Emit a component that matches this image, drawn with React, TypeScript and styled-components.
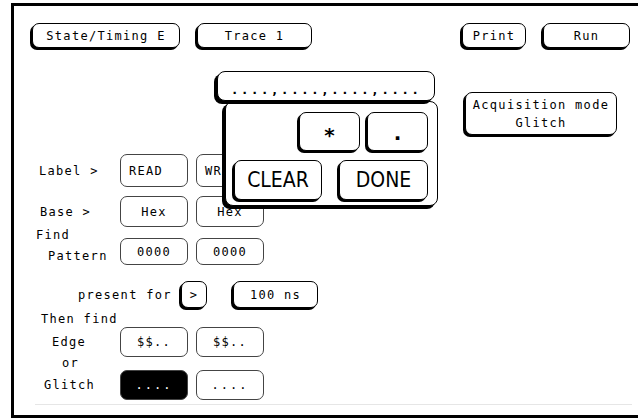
import React from 'react'
import styled, { createGlobalStyle } from 'styled-components'

const GlobalStyle = createGlobalStyle`
  html, body {
    margin: 0;
    padding: 0;
    background: #fff;
    overflow: hidden;
  }
  body {
    font-family: "DejaVu Sans Mono", "Liberation Mono", monospace;
    font-size: 12px;
    letter-spacing: 1.3px;
    color: #000;
  }
`

const Screen = styled.div`
  width: 638px;
  height: 418px;
  overflow: hidden;
  background: #fff;
`

const Frame = styled.div`
  position: relative;
  box-sizing: border-box;
  margin: 3px 0 0 11px;
  width: 627px;
  height: 415px;
  border: 3px solid #000;
  border-right: none;
  display: flex;
  flex-direction: column;
`

const TopBar = styled.div`
  display: flex;
  align-items: center;
  gap: 17px;
  margin: 17px 0 0 18px;
  width: 598px;
  height: 25px;
`

const Spacer = styled.div`
  flex: 1;
`

const Gap = styled.div<{ $w: number }>`
  flex: none;
  width: ${(p) => p.$w}px;
`

type KeyProps = {
  $w: number
  $h: number
  $raised?: boolean
  $left?: boolean
  $dark?: boolean
  $line?: number
}

const Key = styled.div<KeyProps>`
  box-sizing: border-box;
  flex: none;
  width: ${(p) => p.$w}px;
  height: ${(p) => p.$h}px;
  border: ${(p) => p.$line ?? 1}px solid ${(p) => (p.$raised ? '#000' : '#444')};
  border-radius: 7px;
  background: ${(p) => (p.$dark ? '#000' : '#fff')};
  color: ${(p) => (p.$dark ? '#fff' : '#000')};
  box-shadow: ${(p) => (p.$raised ? '-2px 2px 0 #000' : 'none')};
  display: flex;
  align-items: center;
  justify-content: ${(p) => (p.$left ? 'flex-start' : 'center')};
  padding-left: ${(p) => (p.$left ? '8px' : '0')};
  white-space: nowrap;
`

const AcqRow = styled.div`
  display: flex;
  margin: 44px 0 0 451px;
`

const AcqText = styled.div`
  text-align: center;
  line-height: 18px;
`

const Form = styled.div`
  display: flex;
  flex-direction: column;
  margin-top: 19px;
`

const Row = styled.div<{ $h: number; $mt: number }>`
  display: flex;
  align-items: center;
  gap: 8px;
  height: ${(p) => p.$h}px;
  margin-top: ${(p) => p.$mt}px;
`

const LabelCell = styled.div<{ $indent: number; $w?: number }>`
  box-sizing: border-box;
  flex: none;
  width: ${(p) => (p.$w ?? 98)}px;
  padding-left: ${(p) => p.$indent}px;
  white-space: nowrap;
`

const StackCell = styled.div`
  flex: none;
  align-self: flex-start;
  width: 98px;
  display: flex;
  flex-direction: column;
`

const Line = styled.div<{ $indent: number; $mt?: number; $h?: number }>`
  height: ${(p) => p.$h ?? 14}px;
  line-height: ${(p) => p.$h ?? 14}px;
  margin-top: ${(p) => p.$mt ?? 0}px;
  padding-left: ${(p) => p.$indent}px;
  white-space: nowrap;
`

const BottomKeys = styled.div`
  display: flex;
  gap: 8px;
  align-self: flex-end;
`

const Divider = styled.div`
  margin: 4px 0 0 21px;
  width: 597px;
  height: 1px;
  background: #e6e6e6;
`

const Overlay = styled.div`
  position: absolute;
  left: 203px;
  top: 65px;
  display: flex;
  flex-direction: column;
`

const DotField = styled.div`
  position: relative;
  z-index: 2;
  box-sizing: border-box;
  width: 218px;
  height: 30px;
  border: 1.5px solid #000;
  border-radius: 8px;
  background: #fff;
  box-shadow: -3px 3px 0 #000;
  display: flex;
  align-items: flex-end;
  justify-content: center;
  padding-bottom: 3px;
  font-size: 13px;
  font-weight: bold;
  letter-spacing: 2.2px;
`

const Keypad = styled.div`
  box-sizing: border-box;
  margin-left: 8px;
  width: 213px;
  height: 105px;
  border: 1.5px solid #000;
  border-radius: 8px;
  background: #fff;
  box-shadow: -3px 3px 0 #000;
  display: flex;
  flex-direction: column;
  gap: 9px;
  padding: 10px 9px 0 8px;
`

const PadRow = styled.div<{ $end?: boolean }>`
  display: flex;
  gap: ${(p) => (p.$end ? 7 : 17)}px;
  justify-content: ${(p) => (p.$end ? 'flex-end' : 'flex-start')};
`

const BigText = styled.span`
  font-family: "DejaVu Sans", "Liberation Sans", sans-serif;
  font-stretch: condensed;
  font-size: 21px;
  letter-spacing: 0;
  line-height: 1;
`

const Symbol = styled.span<{ $drop: number }>`
  font-family: "DejaVu Sans", "Liberation Sans", sans-serif;
  font-size: 20px;
  font-weight: bold;
  letter-spacing: 0;
  line-height: 1;
  padding-top: ${(p) => p.$drop}px;
`

const Dots = styled.span`
  letter-spacing: 2px;
`

const App: React.FC = () => {
  return (
    <Screen>
      <GlobalStyle />
      <Frame>
        <TopBar>
          <Key $w={148} $h={25} $raised>State/Timing E</Key>
          <Key $w={115} $h={25} $raised>Trace 1</Key>
          <Spacer />
          <Key $w={64} $h={25} $raised>Print</Key>
          <Key $w={87} $h={25} $raised>Run</Key>
        </TopBar>

        <AcqRow>
          <Key $w={152} $h={43} $raised>
            <AcqText>
              Acquisition mode
              <br />
              Glitch
            </AcqText>
          </Key>
        </AcqRow>

        <Form>
          <Row $h={33} $mt={0}>
            <LabelCell $indent={25}>Label &gt;</LabelCell>
            <Key $w={68} $h={33} $left>READ</Key>
            <Key $w={68} $h={33} $left>WR</Key>
          </Row>
          <Row $h={31} $mt={9}>
            <LabelCell $indent={26}>Base &gt;</LabelCell>
            <Key $w={68} $h={31}>Hex</Key>
            <Key $w={68} $h={31}>Hex</Key>
          </Row>
          <Row $h={37} $mt={1}>
            <StackCell>
              <Line $indent={22}>Find</Line>
              <Line $indent={34} $mt={7}>Pattern</Line>
            </StackCell>
            <BottomKeys>
              <Key $w={68} $h={27}>0000</Key>
              <Key $w={68} $h={27}>0000</Key>
            </BottomKeys>
          </Row>
          <Row $h={27} $mt={16}>
            <LabelCell $indent={64} $w={159}>present for</LabelCell>
            <Key $w={26} $h={27} $raised>&gt;</Key>
            <Gap $w={10} />
            <Key $w={85} $h={27} $raised>100 ns</Key>
          </Row>
          <Line $indent={27} $mt={4}>Then find</Line>
          <Row $h={30} $mt={1}>
            <LabelCell $indent={38}>Edge</LabelCell>
            <Key $w={68} $h={30}>$$..</Key>
            <Key $w={68} $h={30}>$$..</Key>
          </Row>
          <Line $indent={48} $h={13}>or</Line>
          <Row $h={30} $mt={0}>
            <LabelCell $indent={30}>Glitch</LabelCell>
            <Key $w={68} $h={30} $dark><Dots>....</Dots></Key>
            <Key $w={68} $h={30}><Dots>....</Dots></Key>
          </Row>
          <Divider />
        </Form>

        <Overlay>
          <DotField>....,....,....,....</DotField>
          <Keypad>
            <PadRow $end>
              <Key $w={61} $h={39} $raised $line={1.5}>
                <Symbol $drop={6}>*</Symbol>
              </Key>
              <Key $w={61} $h={39} $raised $line={1.5}>
                <Symbol $drop={2}>.</Symbol>
              </Key>
            </PadRow>
            <PadRow>
              <Key $w={88} $h={40} $raised $line={1.5}>
                <BigText>CLEAR</BigText>
              </Key>
              <Key $w={89} $h={40} $raised $line={1.5}>
                <BigText>DONE</BigText>
              </Key>
            </PadRow>
          </Keypad>
        </Overlay>
      </Frame>
    </Screen>
  )
}

export default App
